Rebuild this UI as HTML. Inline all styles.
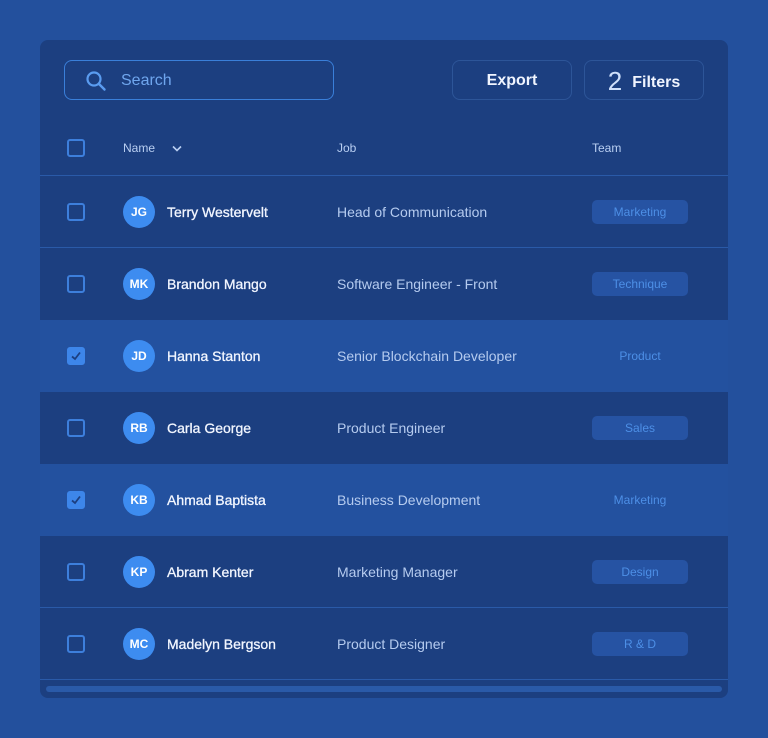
<!DOCTYPE html>
<html><head><style>
*{margin:0;padding:0;box-sizing:border-box}
body{width:768px;height:738px;background:#23509d;font-family:"Liberation Sans",sans-serif;position:relative;overflow:hidden}
.card{position:absolute;left:40px;top:40px;width:688px;height:658px;background:#1c3f80;border-radius:8px;overflow:hidden}
.search{position:absolute;left:24px;top:20px;width:270px;height:40px;border:1px solid #3a7fd9;border-radius:8px}
.search span{position:absolute;left:56px;top:11px;font-size:16px;color:#6fa6ee}
.btn{position:absolute;top:20px;height:40px;border:1px solid #2d5598;border-radius:8px;color:#f0f5ff;font-size:16px;font-weight:bold;text-align:center;line-height:40px}
.hdr{position:absolute;top:101px;font-size:12px;color:#b9cff2}
.line{position:absolute;left:0;width:688px;height:1px;background:#2a5aa8}
.row{position:absolute;left:0;width:688px;height:72px}
.row.sel{background:#23519f}
.cb{position:absolute;left:27px;width:18px;height:18px;border:2px solid #3d7fdc;border-radius:3px}
.cb.on{background:#3d86ea;border-color:#3d86ea}
.av{position:absolute;left:83px;top:20px;width:32px;height:32px;border-radius:50%;background:#3d8cf0;color:#fff;font-size:12px;font-weight:bold;text-align:center;line-height:32px}
.nm{position:absolute;left:127px;top:28px;font-size:14px;color:#f2f6ff;-webkit-text-stroke:0.3px #f2f6ff}
.jb{position:absolute;left:297px;top:28px;font-size:14px;color:#b5cbef}
.bd{position:absolute;left:552px;top:24px;width:96px;height:24px;border-radius:5px;background:#2653a3;color:#4d8fe6;font-size:12px;text-align:center;line-height:24px}
.sel .bd{background:none}
</style></head><body>
<div class="card">
 <div class="search">
  <svg style="position:absolute;left:20px;top:9px" width="22" height="22" viewBox="0 0 22 22"><circle cx="9" cy="9" r="6.5" fill="none" stroke="#5a9cf0" stroke-width="2.2"/><line x1="14" y1="14" x2="19.5" y2="19.5" stroke="#5a9cf0" stroke-width="2.4" stroke-linecap="round"/></svg>
  <span>Search</span>
 </div>
 <div class="btn" style="left:412px;width:120px">Export</div>
 <div class="btn" style="left:544px;width:120px"><span style="font-weight:normal;font-size:26px;color:#cfe0fb;vertical-align:-3px;margin-right:10px">2</span>Filters</div>
 <div class="cb" style="top:99px"></div>
 <div class="hdr" style="left:83px">Name</div>
 <svg style="position:absolute;left:132px;top:105px" width="10" height="7" viewBox="0 0 10 7"><path d="M1 1.5 5 5.5 9 1.5" fill="none" stroke="#b9cff2" stroke-width="1.6"/></svg>
 <div class="hdr" style="left:297px">Job</div>
 <div class="hdr" style="left:552px">Team</div>
 <div class="line" style="top:135px"></div>

 <div class="row" style="top:136px"><div class="cb" style="top:27px"></div><div class="av">JG</div><div class="nm">Terry Westervelt</div><div class="jb">Head of Communication</div><div class="bd">Marketing</div></div>
 <div class="line" style="top:207px"></div>
 <div class="row" style="top:208px"><div class="cb" style="top:27px"></div><div class="av">MK</div><div class="nm">Brandon Mango</div><div class="jb">Software Engineer - Front</div><div class="bd">Technique</div></div>
 <div class="row sel" style="top:280px"><div class="cb on" style="top:27px"><svg width="14" height="14" viewBox="0 0 14 14" style="position:absolute;left:0;top:0"><path d="M3 7.5 6 10 11 3.5" fill="none" stroke="#1c3f80" stroke-width="1.8"/></svg></div><div class="av">JD</div><div class="nm">Hanna Stanton</div><div class="jb">Senior Blockchain Developer</div><div class="bd">Product</div></div>
 <div class="row" style="top:352px"><div class="cb" style="top:27px"></div><div class="av">RB</div><div class="nm">Carla George</div><div class="jb">Product Engineer</div><div class="bd">Sales</div></div>
 <div class="row sel" style="top:424px"><div class="cb on" style="top:27px"><svg width="14" height="14" viewBox="0 0 14 14" style="position:absolute;left:0;top:0"><path d="M3 7.5 6 10 11 3.5" fill="none" stroke="#1c3f80" stroke-width="1.8"/></svg></div><div class="av">KB</div><div class="nm">Ahmad Baptista</div><div class="jb">Business Development</div><div class="bd">Marketing</div></div>
 <div class="row" style="top:496px"><div class="cb" style="top:27px"></div><div class="av">KP</div><div class="nm">Abram Kenter</div><div class="jb">Marketing Manager</div><div class="bd">Design</div></div>
 <div class="line" style="top:567px"></div>
 <div class="row" style="top:568px"><div class="cb" style="top:27px"></div><div class="av">MC</div><div class="nm">Madelyn Bergson</div><div class="jb">Product Designer</div><div class="bd">R &amp; D</div></div>
 <div class="line" style="top:639px"></div>
 <div style="position:absolute;left:6px;top:646px;width:676px;height:6px;border-radius:3px;background:#2a5aa8"></div>
</div>
</body></html>
